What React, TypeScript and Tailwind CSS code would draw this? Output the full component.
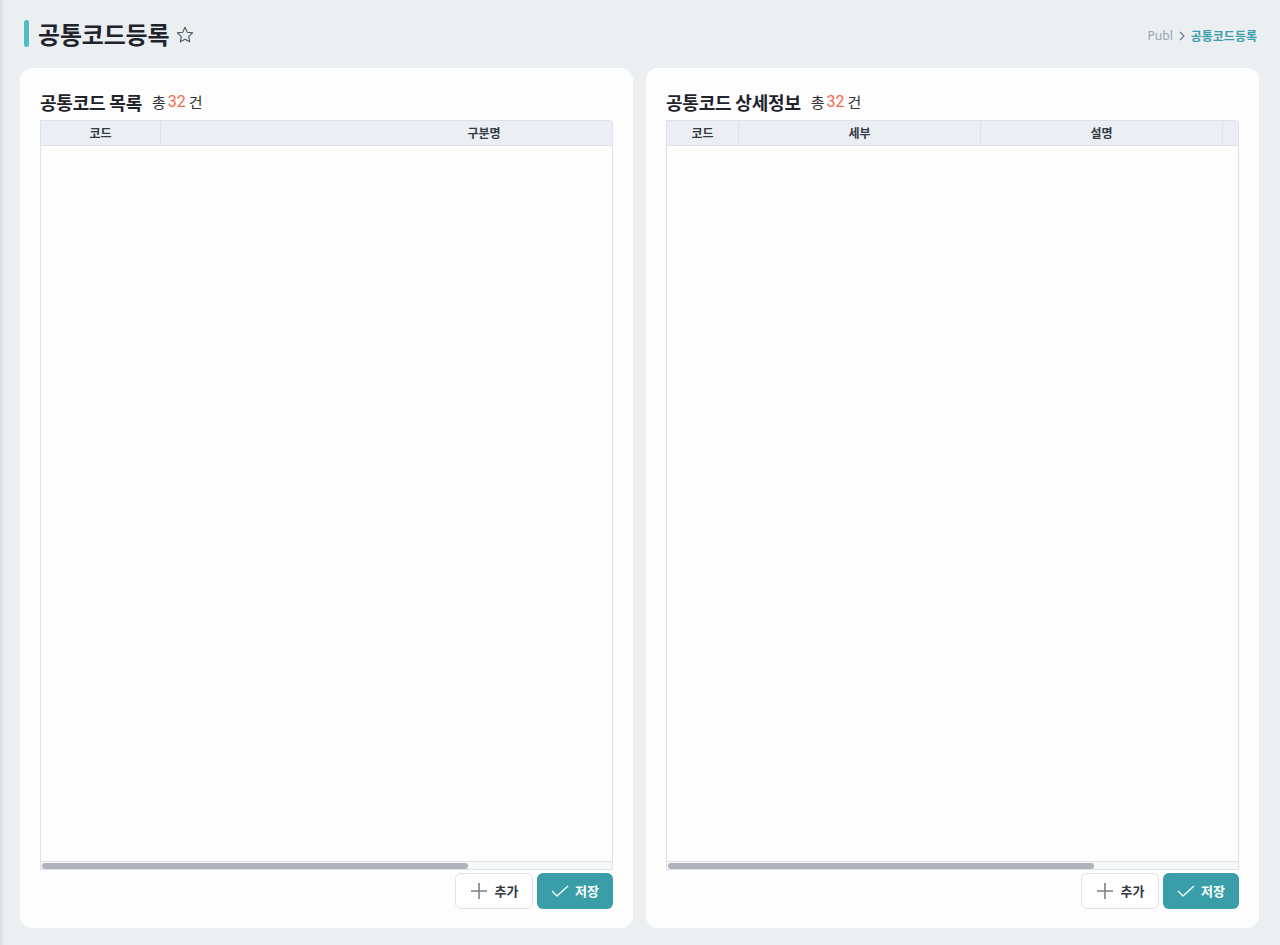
import React from "react";

const font = { fontFamily: '"Noto Sans CJK KR", "Noto Sans", sans-serif' };

function Star() {
  return (
    <svg width="20" height="20" viewBox="0 0 24 24" fill="none" stroke="#4b5563" strokeWidth="1.3" strokeLinejoin="round">
      <path d="M12 2.8l2.75 5.9 6.4.75-4.75 4.4 1.28 6.35L12 17.05 6.32 20.2 7.6 13.85 2.85 9.45l6.4-.75z" />
    </svg>
  );
}

function Plus() {
  return (
    <svg width="18" height="18" viewBox="0 0 18 18" fill="none" stroke="#7b8088" strokeWidth="1.6">
      <path d="M9 1v16M1 9h16" />
    </svg>
  );
}

function Check() {
  return (
    <svg width="18" height="14" viewBox="0 0 18 14" fill="none" stroke="#ffffff" strokeWidth="1.3" strokeLinejoin="round">
      <path d="M1 7l5 5L17 2" />
    </svg>
  );
}

type Col = { label: string; cls: string };

function Grid({ cols, thumb }: { cols: Col[]; thumb: string }) {
  return (
    <div className="flex-1 flex flex-col border border-[#dde2e8] rounded-tr-[3px] bg-white min-h-0 overflow-hidden">
      <div className="flex h-[25px] bg-[#ebeef2] border-b border-[#dde2e8] overflow-hidden">
        {cols.map((c, i) => (
          <div
            key={i}
            className={`${c.cls} shrink-0 flex items-center justify-center text-[12px] font-bold text-[#333a44] ${
              i < cols.length - 1 ? "border-r border-[#dde2e8]" : ""
            }`}
          >
            {c.label}
          </div>
        ))}
      </div>
      <div className="flex-1 bg-[#fefefe]" />
      <div className="h-[8px] border-t border-[#dde2e8] bg-[#f7f8fa] flex items-center px-[1px]">
        <div className={`${thumb} h-[6px] rounded-full bg-[#b0b3b9]`} />
      </div>
    </div>
  );
}

function Card({
  title,
  cols,
  thumb,
}: {
  title: string;
  cols: Col[];
  thumb: string;
}) {
  return (
    <div className="bg-[#fdfdfd] rounded-[12px] h-[860px] px-5 pt-[22px] pb-[19px] flex flex-col">
      <div className="h-6 flex items-center mb-[6px]">
        <span className="text-[18px] font-bold text-[#1f242c] tracking-[-0.2px]">{title}</span>
        <span className="ml-[10px] text-[15px] text-[#333]">총</span>
        <span className="ml-[2px] text-[16px] text-[#f26a4b]" style={{ fontFamily: '"Roboto", "Noto Sans", sans-serif' }}>32</span>
        <span className="ml-[3px] text-[15px] text-[#333]">건</span>
      </div>
      <Grid cols={cols} thumb={thumb} />
      <div className="flex justify-end gap-1 mt-[3px]">
        <button className="h-9 w-[78px] rounded-[6px] border border-[#dfe3e8] bg-white flex items-center justify-center gap-[7px] text-[13px] font-bold text-[#333a44]">
          <Plus />
          추가
        </button>
        <button className="h-9 w-[76px] rounded-[6px] bg-[#3a9ea8] flex items-center justify-center gap-[6px] text-[13px] font-bold text-white">
          <Check />
          저장
        </button>
      </div>
    </div>
  );
}

export default function App() {
  return (
    <div className="min-h-[945px] bg-[#ebeff2] relative" style={font}>
      <div className="absolute left-0 top-0 bottom-0 w-[4px] bg-gradient-to-r from-[#d9dde2] to-[#ebeff2]" />
      <div className="flex items-center justify-between pl-6 pr-[23px] pt-5 h-[68px] pb-[21px]">
        <div className="flex items-center">
          <div className="w-[5px] h-[27px] rounded-full bg-[#4fbdc6]" />
          <h1 className="ml-[9px] text-[24px] font-bold text-[#1f242c] leading-none tracking-[-0.2px]">공통코드등록</h1>
          <span className="ml-[6px] mt-[2px]"><Star /></span>
        </div>
        <div className="flex items-center text-[12px] mt-[4px]">
          <span className="text-[#98a2b6]" style={{ fontFamily: '"Noto Sans", sans-serif' }}>Publ</span>
          <svg className="mx-[5px]" width="8" height="10" viewBox="0 0 8 10" fill="none" stroke="#6b7280" strokeWidth="1.1">
            <path d="M2 1l4 4-4 4" />
          </svg>
          <span className="font-bold text-[#3a9ea8]">공통코드등록</span>
        </div>
      </div>
      <div className="grid grid-cols-2 gap-[13px] pl-5 pr-[21px]">
        <Card
          title="공통코드 목록"
          cols={[
            { label: "코드", cls: "w-[120px]" },
            { label: "구분명", cls: "w-[646px]" },
          ]}
          thumb="w-[426px]"
        />
        <Card
          title="공통코드 상세정보"
          cols={[
            { label: "코드", cls: "w-[72px]" },
            { label: "세부", cls: "w-[242px]" },
            { label: "설명", cls: "w-[242px]" },
            { label: "", cls: "w-[200px]" },
          ]}
          thumb="w-[426px]"
        />
      </div>
    </div>
  );
}
